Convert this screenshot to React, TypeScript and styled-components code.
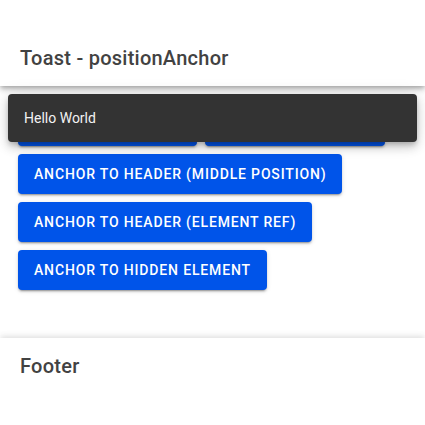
import React from 'react';
import styled, { createGlobalStyle } from 'styled-components';

const GlobalStyle = createGlobalStyle`
  html, body {
    margin: 0;
    padding: 0;
    height: 100%;
    background: #fff;
    font-family: Roboto, "Liberation Sans", sans-serif;
    -webkit-font-smoothing: antialiased;
  }
  #root {
    height: 100%;
  }
`;

const Page = styled.div`
  display: flex;
  flex-direction: column;
  height: 100vh;
  overflow: hidden;
`;

const Header = styled.header`
  position: relative;
  z-index: 2;
  padding-top: 30px;
  background: #fff;
  box-shadow: 0 2px 4px -1px rgba(0, 0, 0, 0.2), 0 4px 5px 0 rgba(0, 0, 0, 0.14),
    0 1px 10px 0 rgba(0, 0, 0, 0.12);
`;

const Footer = styled.footer`
  position: relative;
  z-index: 2;
  padding-bottom: 31px;
  background: #fff;
  box-shadow: 0 -2px 4px -1px rgba(0, 0, 0, 0.06), 0 -4px 5px 0 rgba(0, 0, 0, 0.04),
    0 -1px 10px 0 rgba(0, 0, 0, 0.04);
`;

const Toolbar = styled.div`
  display: flex;
  align-items: center;
  min-height: 56px;
`;

const Title = styled.div`
  padding: 0 20px;
  font-size: 20px;
  font-weight: 500;
  letter-spacing: 0.0125em;
  color: #424242;
`;

const Content = styled.main`
  position: relative;
  flex: 1;
  padding: 16px;
`;

const ButtonRows = styled.div`
  display: flex;
  flex-direction: column;
  align-items: flex-start;
`;

const Row = styled.div`
  display: flex;
  gap: 8px;
  margin: 0 2px;
`;

const Button = styled.button`
  height: 40px;
  margin: 4px 0;
  padding: 0 16px;
  border: none;
  border-radius: 4px;
  background: #0054e9;
  color: #fff;
  font-family: Roboto, "Liberation Sans", sans-serif;
  font-size: 14px;
  font-weight: 500;
  letter-spacing: 0.06em;
  text-transform: uppercase;
  white-space: nowrap;
  box-shadow: 0 3px 1px -2px rgba(0, 0, 0, 0.2), 0 2px 2px 0 rgba(0, 0, 0, 0.14),
    0 1px 5px 0 rgba(0, 0, 0, 0.12);
  cursor: pointer;
`;

const Toast = styled.div`
  position: absolute;
  top: 8px;
  left: 8px;
  right: 8px;
  z-index: 3;
  display: flex;
  align-items: center;
  height: 48px;
  padding: 0 16px;
  border-radius: 4px;
  background: #333333;
  color: #f2f2f2;
  font-size: 14px;
  box-shadow: 0 3px 5px -1px rgba(0, 0, 0, 0.2), 0 6px 10px 0 rgba(0, 0, 0, 0.14),
    0 1px 18px 0 rgba(0, 0, 0, 0.12);
`;

const App = () => {
  return (
    <>
      <GlobalStyle />
      <Page>
        <Header>
          <Toolbar>
            <Title>Toast - positionAnchor</Title>
          </Toolbar>
        </Header>
        <Content>
          <Toast>Hello World</Toast>
          <ButtonRows>
            <Row>
              <Button>Anchor to Footer</Button>
              <Button>Anchor to Header</Button>
            </Row>
            <Row>
              <Button>Anchor to Header (Middle Position)</Button>
            </Row>
            <Row>
              <Button>Anchor to Header (Element Ref)</Button>
            </Row>
            <Row>
              <Button>Anchor to Hidden Element</Button>
            </Row>
          </ButtonRows>
        </Content>
        <Footer>
          <Toolbar>
            <Title>Footer</Title>
          </Toolbar>
        </Footer>
      </Page>
    </>
  );
};

export default App;
